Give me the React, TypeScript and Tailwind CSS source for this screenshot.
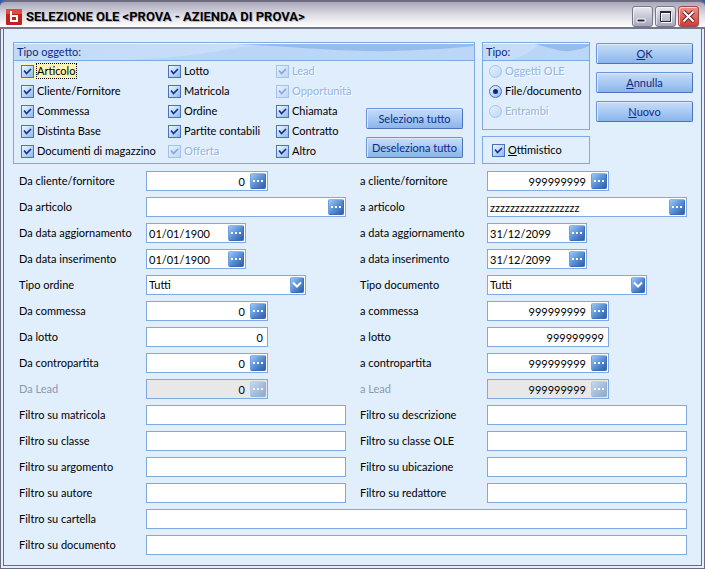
import type { ReactNode } from "react";

function CheckBox({
  id,
  label,
  disabled = false,
  focused = false,
}: {
  id: string;
  label: ReactNode;
  disabled?: boolean;
  focused?: boolean;
}) {
  return (
    <div className="flex h-5 items-center">
      <div className={`flex items-center gap-[2px] ${focused ? "bg-[#fff2b4]" : ""}`}>
        <span className="relative block h-[13px] w-[13px]">
          <input
            id={id}
            type="checkbox"
            defaultChecked
            disabled={disabled}
            className="block h-[13px] w-[13px] appearance-none border border-[#4a72ba] bg-linear-to-br from-[#f0f7ff] to-[#8fb8ee] disabled:border-[#a3c2ec] disabled:from-[#e6f1fe] disabled:to-[#bdd6f6]"
          />
          <svg
            viewBox="0 0 13 13"
            className={`pointer-events-none absolute inset-0 ${disabled ? "text-[#86a5d8]" : "text-[#12308c]"}`}
            fill="none"
            stroke="currentColor"
            strokeWidth="1.6"
            aria-hidden="true"
          >
            <path d="M3 5.500 L5.500 8.500 L10 4" />
          </svg>
        </span>
        <label
          htmlFor={id}
          className={`border border-dotted pr-px leading-[14px] whitespace-nowrap ${
            focused ? "border-black" : "border-transparent"
          } ${disabled ? "text-[#93b4e4] [text-shadow:1px_1px_0_#fff]" : "text-black"}`}
        >
          {label}
        </label>
      </div>
    </div>
  );
}

function Radio({ id, label, checked = false, disabled = false }: { id: string; label: string; checked?: boolean; disabled?: boolean }) {
  return (
    <div className="flex h-5 items-center gap-[2px]">
      <span className="relative block h-[13px] w-[13px]">
        <input
          id={id}
          type="radio"
          name="tipo"
          defaultChecked={checked}
          disabled={disabled}
          className="block h-[13px] w-[13px] appearance-none rounded-full border border-[#4a72ba] bg-linear-to-br from-[#f0f7ff] to-[#8fb8ee] disabled:border-[#a3c2ec] disabled:from-[#e6f1fe] disabled:to-[#bdd6f6]"
        />
        {checked && <span className="pointer-events-none absolute inset-1 rounded-full bg-[#12267c]" />}
      </span>
      <label
        htmlFor={id}
        className={`pl-px whitespace-nowrap ${disabled ? "text-[#93b4e4] [text-shadow:1px_1px_0_#fff]" : "text-black"}`}
      >
        {label}
      </label>
    </div>
  );
}

function PushButton({ children }: { children: ReactNode }) {
  return (
    <button
      type="button"
      className="h-[21px] w-[97px] rounded-[2px] border border-[#6b95d8] border-r-[#4a74bd] border-b-[#4a74bd] bg-linear-to-b from-[#c6dcf8] via-[#a9caf3] to-[#8bb4ea] text-center leading-[18px] text-[#0d2a86] shadow-[inset_1px_1px_0_#dcebfc]"
    >
      {children}
    </button>
  );
}

function Group({ title, className, children }: { title: string; className?: string; children: ReactNode }) {
  return (
    <fieldset className={`min-w-0 border border-[#7fa9e3] bg-[#e0edfc] ${className ?? ""}`}>
      <div className="relative h-[18px] border-b border-[#7fa9e3] bg-linear-to-r from-[#c3daf7] to-[#cfe2f9]">
        <svg viewBox="0 0 100 17" preserveAspectRatio="none" className="absolute inset-0 h-full w-full" aria-hidden="true">
          <path d="M25 17 C45 13 48 1 58 1 H100 V17 Z" fill="#b4d2f5" opacity="0.7" />
          <path d="M48 1 C62 4 72 9 82 8 C90 7 96 5 100 3 V0 H40 Z" fill="#94bdee" />
          <rect width="100" height="1" fill="#f2f8ff" />
        </svg>
        <span className="relative block pl-[3px] leading-[18px] text-[#0d2a86]">{title}</span>
      </div>
      {children}
    </fieldset>
  );
}

function DotsButton({ disabled = false, label }: { disabled?: boolean; label: string }) {
  return (
    <button
      type="button"
      disabled={disabled}
      aria-label={label}
      className="m-px flex h-4 w-4 shrink-0 items-center justify-center gap-[2px] rounded-[2px] border border-[#3e6db8] border-t-[#8ab6ea] border-l-[#6f9edd] bg-linear-to-br from-[#9cc8f4] via-[#5a90d8] to-[#2f5cab] disabled:opacity-45"
    >
      <span className="h-[2px] w-[2px] bg-white" />
      <span className="h-[2px] w-[2px] bg-white" />
      <span className="h-[2px] w-[2px] bg-white" />
    </button>
  );
}

type FieldProps = {
  id: string;
  label: string;
  value?: string;
  kind?: "text" | "number" | "plain" | "wide" | "date" | "select";
  disabled?: boolean;
  full?: boolean;
};

function Field({ id, label, value = "", kind = "text", disabled = false, full = false }: FieldProps) {
  const widths = {
    text: "flex-1",
    wide: "flex-1",
    number: "w-[122px]",
    plain: "w-[122px]",
    date: "w-[100px]",
    select: "w-[160px]",
  };
  const numeric = kind === "number" || kind === "plain";
  const dots = kind === "number" || kind === "wide" || kind === "date";
  return (
    <div className={`flex items-center ${full ? "col-span-2" : ""}`}>
      <label htmlFor={id} className={`w-[127px] shrink-0 leading-5 whitespace-nowrap ${disabled ? "text-[#8d97ac]" : "text-black"}`}>
        {label}
      </label>
      <div
        className={`relative flex h-5 min-w-0 items-center border border-[#7fa9e3] ${widths[kind]} ${
          disabled ? "bg-[#e8e8e8]" : "bg-white"
        }`}
      >
        {kind === "select" ? (
          <>
            <select id={id} defaultValue={value} className="h-full w-full appearance-none bg-transparent pl-[2px] outline-none">
              <option>{value}</option>
            </select>
            <span className="pointer-events-none absolute top-px right-px flex h-4 w-[14px] items-center justify-center rounded-[2px] border border-[#3e6db8] border-t-[#8ab6ea] border-l-[#6f9edd] bg-linear-to-br from-[#9cc8f4] via-[#5a90d8] to-[#2f5cab]">
              <svg viewBox="0 0 10 8" className="h-2 w-[10px]" fill="none" stroke="#fff" strokeWidth="2" aria-hidden="true">
                <path d="M1 1.500 L5 5.500 L9 1.500" />
              </svg>
            </span>
          </>
        ) : (
          <input
            id={id}
            type="text"
            defaultValue={value}
            disabled={disabled}
            className={`h-full w-full min-w-0 flex-1 bg-transparent pl-[2px] text-black outline-none ${numeric ? "pr-1 text-right" : ""}`}
          />
        )}
        {dots && <DotsButton disabled={disabled} label={`Cerca ${label}`} />}
      </div>
    </div>
  );
}

const fields: FieldProps[] = [
  { id: "daCliente", label: "Da cliente/fornitore", kind: "number", value: "0" },
  { id: "aCliente", label: "a cliente/fornitore", kind: "number", value: "999999999" },
  { id: "daArticolo", label: "Da articolo", kind: "wide" },
  { id: "aArticolo", label: "a articolo", kind: "wide", value: "zzzzzzzzzzzzzzzzzz" },
  { id: "daAgg", label: "Da data aggiornamento", kind: "date", value: "01/01/1900" },
  { id: "aAgg", label: "a data aggiornamento", kind: "date", value: "31/12/2099" },
  { id: "daIns", label: "Da data inserimento", kind: "date", value: "01/01/1900" },
  { id: "aIns", label: "a data inserimento", kind: "date", value: "31/12/2099" },
  { id: "tipoOrdine", label: "Tipo ordine", kind: "select", value: "Tutti" },
  { id: "tipoDocumento", label: "Tipo documento", kind: "select", value: "Tutti" },
  { id: "daCommessa", label: "Da commessa", kind: "number", value: "0" },
  { id: "aCommessa", label: "a commessa", kind: "number", value: "999999999" },
  { id: "daLotto", label: "Da lotto", kind: "plain", value: "0" },
  { id: "aLotto", label: "a lotto", kind: "plain", value: "999999999" },
  { id: "daContro", label: "Da contropartita", kind: "number", value: "0" },
  { id: "aContro", label: "a contropartita", kind: "number", value: "999999999" },
  { id: "daLead", label: "Da Lead", kind: "number", value: "0", disabled: true },
  { id: "aLead", label: "a Lead", kind: "number", value: "999999999", disabled: true },
  { id: "fMatricola", label: "Filtro su matricola" },
  { id: "fDescrizione", label: "Filtro su descrizione" },
  { id: "fClasse", label: "Filtro su classe" },
  { id: "fClasseOle", label: "Filtro su classe OLE" },
  { id: "fArgomento", label: "Filtro su argomento" },
  { id: "fUbicazione", label: "Filtro su ubicazione" },
  { id: "fAutore", label: "Filtro su autore" },
  { id: "fRedattore", label: "Filtro su redattore" },
  { id: "fCartella", label: "Filtro su cartella", full: true },
  { id: "fDocumento", label: "Filtro su documento", full: true },
];

const captionButton =
  "flex h-[21px] w-[21px] items-center justify-center rounded-[3px] border border-[#77788c] shadow-[inset_1px_1px_0_rgba(255,255,255,0.6)]";

function TitleBar() {
  return (
    <header className="flex h-[29px] items-center gap-1 rounded-t-[6px] border-t-2 border-b-2 border-t-[#6d6b80] border-b-[#77758a] bg-linear-to-b from-[#a9a7b8] via-[#dcdbe4] to-white pr-[6px] pl-[6px]">
      <svg viewBox="0 0 16 16" className="mt-1 h-4 w-4 shrink-0" aria-hidden="true">
        <rect width="16" height="16" rx="1" fill="#c4201f" />
        <rect x="0" y="0" width="16" height="5" fill="#dc4b44" />
        <path d="M5 2 V12 H11 V7 H5" fill="none" stroke="#fff" strokeWidth="2" />
      </svg>
      <h1 className="mt-1 min-w-0 flex-1 truncate font-[Roboto,sans-serif] text-[13px] leading-5 font-bold text-black [text-shadow:1px_1px_0_#b8b6c6]">
        SELEZIONE OLE &lt;PROVA - AZIENDA DI PROVA&gt;
      </h1>
      <div className="flex gap-[2px] pt-[3px]">
        <button type="button" aria-label="Riduci a icona" className={`${captionButton} bg-linear-to-b from-[#e9e9f0] to-[#a5a6ba]`}>
          <svg viewBox="0 0 19 19" className="h-[19px] w-[19px]" aria-hidden="true">
            <path d="M4 12 H12 V15 H4 Z" fill="#26273a" stroke="#fff" strokeWidth="1" />
          </svg>
        </button>
        <button type="button" aria-label="Ingrandisci" className={`${captionButton} bg-linear-to-b from-[#e9e9f0] to-[#a5a6ba]`}>
          <svg viewBox="0 0 19 19" className="h-[19px] w-[19px]" fill="none" aria-hidden="true">
            <path d="M5.500 6.500 H15.500 V15.500 H5.500 Z" stroke="#fff" />
            <path d="M4.500 5 V14.500 H14.500 V5" stroke="#26273a" />
            <path d="M4 5 H15" stroke="#26273a" strokeWidth="2" />
          </svg>
        </button>
        <button type="button" aria-label="Chiudi" className={`${captionButton} border-[#a04848] bg-linear-to-b from-[#ec8f86] to-[#cf3a38]`}>
          <svg viewBox="0 0 19 19" className="h-[19px] w-[19px]" fill="none" aria-hidden="true">
            <path d="M4.500 4.500 L14.500 14.500 M14.500 4.500 L4.500 14.500" stroke="#6d1c24" strokeWidth="4" />
            <path d="M4.500 4.500 L14.500 14.500 M14.500 4.500 L4.500 14.500" stroke="#fff" strokeWidth="2" />
          </svg>
        </button>
      </div>
    </header>
  );
}

export default function App() {
  return (
    <div className="min-h-screen bg-[#2f5fb5] font-[Lato,'Liberation_Sans',sans-serif] text-[11px] leading-4">
      <div className="flex min-h-screen flex-col rounded-t-[6px]">
        <TitleBar />
        <main className="flex-1 border-4 border-t-0 border-double border-[#6c6a80] bg-[#e1effd]">
          <div className="flex pt-[13px] pr-2 pl-[9px]">
            <Group title="Tipo oggetto:" className="mr-[7px] flex-1">
              <div className="grid grid-cols-[147px_108px_90px_1fr] pb-[2px] pl-[7px]">
                <div>
                  <CheckBox id="articolo" label="Articolo" focused />
                  <CheckBox id="cliente" label="Cliente/Fornitore" />
                  <CheckBox id="commessa" label="Commessa" />
                  <CheckBox id="distinta" label="Distinta Base" />
                  <CheckBox id="docmag" label="Documenti di magazzino" />
                </div>
                <div>
                  <CheckBox id="lotto" label="Lotto" />
                  <CheckBox id="matricola" label="Matricola" />
                  <CheckBox id="ordine" label="Ordine" />
                  <CheckBox id="partite" label="Partite contabili" />
                  <CheckBox id="offerta" label="Offerta" disabled />
                </div>
                <div>
                  <CheckBox id="lead" label="Lead" disabled />
                  <CheckBox id="opportunita" label="Opportunità" disabled />
                  <CheckBox id="chiamata" label="Chiamata" />
                  <CheckBox id="contratto" label="Contratto" />
                  <CheckBox id="altro" label="Altro" />
                </div>
                <div className="flex flex-col justify-end gap-2 pb-[3px]">
                  <PushButton>Seleziona tutto</PushButton>
                  <PushButton>Deseleziona tutto</PushButton>
                </div>
              </div>
            </Group>
            <div className="flex w-[108px] flex-col gap-[6px]">
              <Group title="Tipo:" className="flex-1">
                <div className="pl-[6px]">
                  <Radio id="oggettiOle" label="Oggetti OLE" disabled />
                  <Radio id="fileDocumento" label="File/documento" checked />
                  <Radio id="entrambi" label="Entrambi" disabled />
                </div>
              </Group>
              <div className="flex h-7 items-center border border-[#7fa9e3] pl-[9px]">
                <CheckBox id="ottimistico" label={<><u>O</u>ttimistico</>} />
              </div>
            </div>
            <div className="ml-[6px] flex flex-col gap-2 pt-px">
              <PushButton><u>O</u>K</PushButton>
              <PushButton><u>A</u>nnulla</PushButton>
              <PushButton><u>N</u>uovo</PushButton>
            </div>
          </div>
          <form className="grid grid-cols-2 gap-x-[14px] gap-y-[6px] pt-[7px] pr-[14px] pb-[10px] pl-[15px]">
            {fields.map((field) => (
              <Field key={field.id} {...field} />
            ))}
          </form>
        </main>
      </div>
    </div>
  );
}
